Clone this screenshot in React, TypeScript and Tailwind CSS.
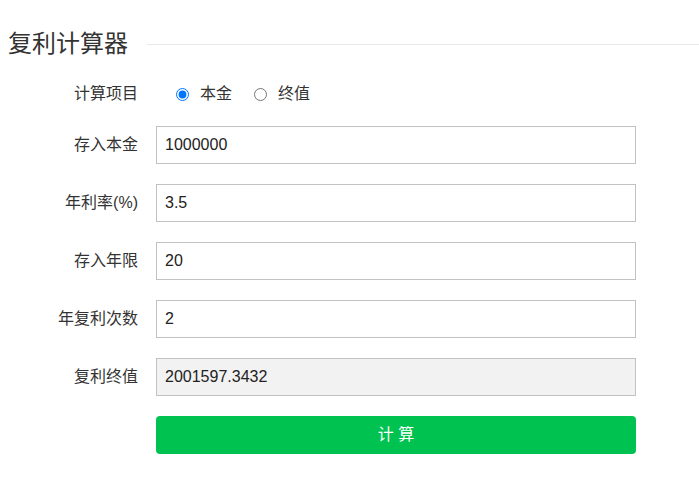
import { useState } from "react";

const font = { fontFamily: '"Liberation Sans", "Noto Sans CJK SC", sans-serif' };

function Row({ label, children }: { label: string; children: React.ReactNode }) {
  return (
    <div className="flex items-center h-[38px]">
      <label className="w-[138px] shrink-0 text-right text-[16px] text-[#333]">{label}</label>
      <div className="ml-[18px]">{children}</div>
    </div>
  );
}

export default function App() {
  const [mode, setMode] = useState<"principal" | "final">("principal");
  const [principal, setPrincipal] = useState("1000000");
  const [rate, setRate] = useState("3.5");
  const [years, setYears] = useState("20");
  const [times, setTimes] = useState("2");
  const [result, setResult] = useState("2001597.3432");

  const calc = () => {
    const p = parseFloat(principal);
    const r = parseFloat(rate) / 100;
    const n = parseFloat(years);
    const m = parseFloat(times);
    if ([p, r, n, m].some((v) => isNaN(v)) || m === 0) return;
    setResult((p * Math.pow(1 + r / m, n * m)).toFixed(4));
  };

  const inputCls =
    "w-[480px] h-[38px] border border-[#c2c2c2] px-[8px] text-[16px] text-[#222] outline-none";

  return (
    <div className="w-[699px] h-[478px] bg-white" style={font}>
      <div className="flex items-center pt-[28px] pl-[8px]">
        <h1 className="text-[24px] leading-8 text-[#333] font-normal">复利计算器</h1>
        <div className="flex-1 ml-[19px] h-px bg-[#e8e8e8]" />
      </div>

      <div className="mt-[15px]">
        <Row label="计算项目">
          <div className="flex items-center text-[16px] text-[#333]">
            <label className="flex items-center">
              <input
                type="radio"
                name="mode"
                checked={mode === "principal"}
                onChange={() => setMode("principal")}
                className="w-[13px] h-[13px] m-0 ml-[20px] accent-[#0075ff]"
              />
              <span className="ml-[11px]">本金</span>
            </label>
            <label className="flex items-center">
              <input
                type="radio"
                name="mode"
                checked={mode === "final"}
                onChange={() => setMode("final")}
                className="w-[13px] h-[13px] m-0 ml-[22px] accent-[#0075ff]"
              />
              <span className="ml-[11px]">终值</span>
            </label>
          </div>
        </Row>
      </div>

      <div className="mt-[13px] flex flex-col gap-[20px]">
        <Row label="存入本金">
          <input className={inputCls} value={principal} onChange={(e) => setPrincipal(e.target.value)} />
        </Row>
        <Row label="年利率(%)">
          <input className={inputCls} value={rate} onChange={(e) => setRate(e.target.value)} />
        </Row>
        <Row label="存入年限">
          <input className={inputCls} value={years} onChange={(e) => setYears(e.target.value)} />
        </Row>
        <Row label="年复利次数">
          <input className={inputCls} value={times} onChange={(e) => setTimes(e.target.value)} />
        </Row>
        <Row label="复利终值">
          <input className={inputCls + " bg-[#f2f2f2]"} value={result} readOnly />
        </Row>
        <Row label="">
          <button
            onClick={calc}
            className="w-[480px] h-[38px] rounded-[4px] bg-[#00c250] text-white text-[16px]"
          >
            计 算
          </button>
        </Row>
      </div>
    </div>
  );
}
